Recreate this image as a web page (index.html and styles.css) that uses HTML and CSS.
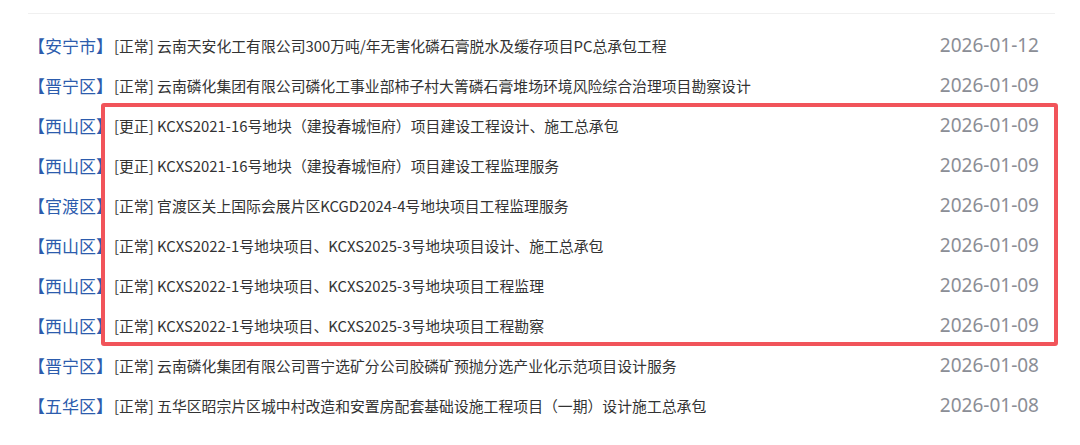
FILE: index.html
```html
<!DOCTYPE html>
<html lang="zh-CN">
<head>
<meta charset="UTF-8">
<title>招标公告</title>
<link rel="stylesheet" href="styles.css">
</head>
<body>

<div class="panel">
  <ul class="news">
    <li><span class="area">【安宁市】</span><a class="title">[正常] 云南天安化工有限公司300万吨/年无害化磷石膏脱水及缓存项目PC总承包工程</a><span class="date">2026-01-12</span></li>
    <li><span class="area">【晋宁区】</span><a class="title">[正常] 云南磷化集团有限公司磷化工事业部柿子村大箐磷石膏堆场环境风险综合治理项目勘察设计</a><span class="date">2026-01-09</span></li>
    <li><span class="area">【西山区】</span><a class="title">[更正] KCXS2021-16号地块（建投春城恒府）项目建设工程设计、施工总承包</a><span class="date">2026-01-09</span></li>
    <li><span class="area">【西山区】</span><a class="title">[更正] KCXS2021-16号地块（建投春城恒府）项目建设工程监理服务</a><span class="date">2026-01-09</span></li>
    <li><span class="area">【官渡区】</span><a class="title">[正常] 官渡区关上国际会展片区KCGD2024-4号地块项目工程监理服务</a><span class="date">2026-01-09</span></li>
    <li><span class="area">【西山区】</span><a class="title">[正常] KCXS2022-1号地块项目、KCXS2025-3号地块项目设计、施工总承包</a><span class="date">2026-01-09</span></li>
    <li><span class="area">【西山区】</span><a class="title">[正常] KCXS2022-1号地块项目、KCXS2025-3号地块项目工程监理</a><span class="date">2026-01-09</span></li>
    <li><span class="area">【西山区】</span><a class="title">[正常] KCXS2022-1号地块项目、KCXS2025-3号地块项目工程勘察</a><span class="date">2026-01-09</span></li>
    <li><span class="area">【晋宁区】</span><a class="title">[正常] 云南磷化集团有限公司晋宁选矿分公司胶磷矿预抛分选产业化示范项目设计服务</a><span class="date">2026-01-08</span></li>
    <li><span class="area">【五华区】</span><a class="title">[正常] 五华区昭宗片区城中村改造和安置房配套基础设施工程项目（一期）设计施工总承包</a><span class="date">2026-01-08</span></li>
  </ul>
  <!-- 标注框 -->
  <div class="mark"></div>
</div>

</body>
</html>
```

FILE: styles.css
```css
body, html {
  margin: 0;
  padding: 0;
  background: #fff;
  font-family: "Noto Sans", "Noto Sans CJK SC", sans-serif;
}
.panel {
  position: relative;
  margin: 13px 25px 0 28px;
  border-top: 1px solid #f0f0f0;
  padding-top: 11px;
}
.news {
  list-style: none;
  margin: 0;
  padding: 0;
}
.news li {
  display: flex;
  align-items: center;
  height: 40px;
  padding-right: 16px;
}
.area {
  color: #2c5cad;
  font-family: "Noto Sans CJK SC", sans-serif;
  font-size: 17px;
  white-space: nowrap;
}
.title {
  flex: 1;
  color: #333;
  font-family: "Noto Sans CJK SC", sans-serif;
  font-size: 14.85px;
  margin-left: 1px;
  white-space: nowrap;
  overflow: hidden;
}
.date {
  color: #8b8e96;
  font-size: 19px;
}
.mark {
  position: absolute;
  box-sizing: border-box;
  left: 73px;
  top: 89px;
  width: 957px;
  height: 243px;
  border: 4px solid #f1545a;
  border-radius: 3px;
}
```
